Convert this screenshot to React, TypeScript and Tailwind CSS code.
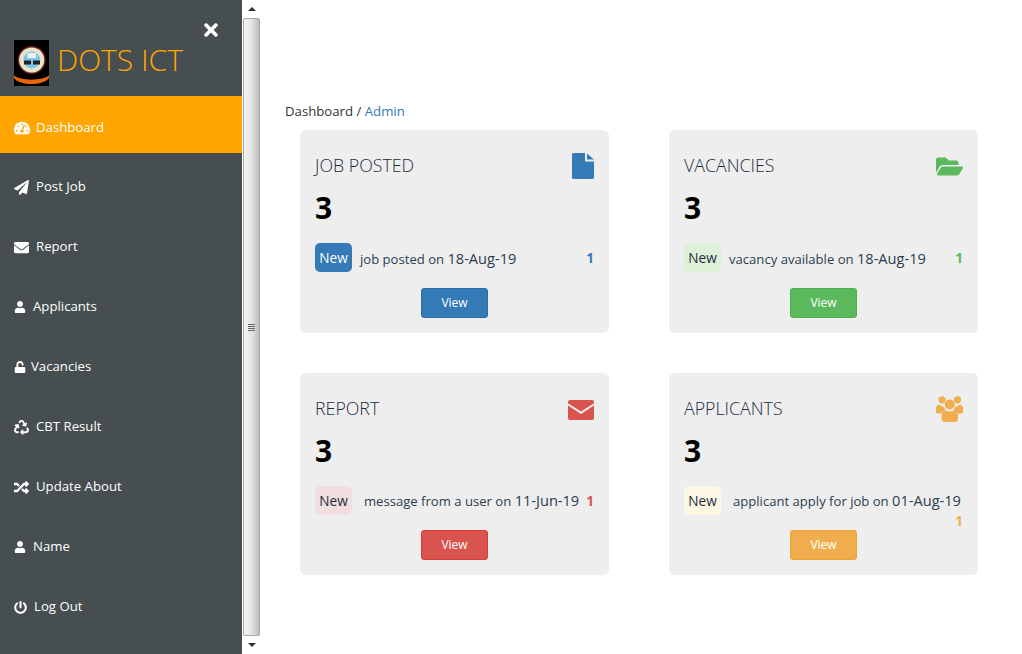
import { FaTachometerAlt, FaPaperPlane, FaEnvelope, FaUser, FaUnlock, FaRecycle, FaRandom, FaPowerOff, FaTimes, FaFolderOpen } from "react-icons/fa";

const font = "font-['Open_Sans','Noto_Sans',sans-serif]";

const navItems = [
  { label: "Post Job", icon: <FaPaperPlane size={15} />, slot: "w-[22px]" },
  { label: "Report", icon: <FaEnvelope size={15} />, slot: "w-[22px]" },
  { label: "Applicants", icon: <FaUser size={12} />, slot: "w-[19px]" },
  { label: "Vacancies", icon: <FaUnlock size={12} />, slot: "w-[17px]" },
  { label: "CBT Result", icon: <FaRecycle size={15} />, slot: "w-[22px]" },
  { label: "Update About", icon: <FaRandom size={15} />, slot: "w-[22px]" },
  { label: "Name", icon: <FaUser size={12} />, slot: "w-[19px]" },
  { label: "Log Out", icon: <FaPowerOff size={13} />, slot: "w-[20px]" },
];

function FileIcon() {
  return (
    <svg width="22" height="26" viewBox="0 0 22 26" fill="#337ab7">
      <path d="M1.5 0H13v8.5h9V24.5a1.5 1.5 0 0 1-1.5 1.5h-19A1.5 1.5 0 0 1 0 24.5V1.5A1.5 1.5 0 0 1 1.5 0Z" />
      <path d="M15 0.5 22 6.5H15Z" />
    </svg>
  );
}

function MailIcon() {
  return (
    <svg width="26" height="20" viewBox="0 0 26 20" fill="#d9534f">
      <path d="M2 0H24a2 2 0 0 1 2 2V3.2L13 11.5 0 3.2V2A2 2 0 0 1 2 0Z" />
      <path d="M0 5.6 13 14 26 5.6V18a2 2 0 0 1-2 2H2a2 2 0 0 1-2-2Z" />
    </svg>
  );
}

function UsersIcon() {
  return (
    <svg width="27" height="26" viewBox="0 0 27 26" fill="#f0ad4e">
      <circle cx="6" cy="3.8" r="3.6" />
      <circle cx="21.5" cy="3.8" r="3.6" />
      <circle cx="13.7" cy="8.5" r="5" />
      <path d="M0 12.5C0 9.5 2 8.5 3.5 8.5 4.5 10 6 10.5 7.5 10.5 8 12 8.8 13.2 10 14 7.5 14.5 5.8 16 5.3 17.5H1.5C.5 17.5 0 16.5 0 15.5Z" />
      <path d="M27 12.5C27 9.5 25 8.5 23.5 8.5 22.5 10 21 10.5 19.5 10.5 19 12 18.2 13.2 17 14 19.5 14.5 21.2 16 21.7 17.5H25.5C26.5 17.5 27 16.5 27 15.5Z" />
      <path d="M9.5 14.6C11 15.8 16.4 15.8 18 14.6 20.5 15 22 17 22 20V23C22 25 20.5 26 19 26H8.5C7 26 5.5 25 5.5 23V20C5.5 17 7 15 9.5 14.6Z" />
    </svg>
  );
}

const cards = [
  {
    title: "JOB POSTED",
    icon: <FileIcon />,
    iconBox: "h-[26px] mt-[-1px]",
    badge: "bg-[#337ab7] text-white",
    count: "text-[#337ab7]",
    text: "job posted on ",
    date: "18-Aug-19",
    textGap: "ml-2",
    btn: "bg-[#337ab7] border-[#2e6da4]",
  },
  {
    title: "VACANCIES",
    icon: <FaFolderOpen size={27} color="#5cb85c" />,
    iconBox: "h-[26px] mt-[-1px]",
    badge: "bg-[#dff0d8] text-[#1f2d3d]",
    count: "text-[#5cb85c]",
    text: "vacancy available on ",
    date: "18-Aug-19",
    textGap: "ml-2",
    btn: "bg-[#5cb85c] border-[#4cae4c]",
  },
  {
    title: "REPORT",
    icon: <MailIcon />,
    iconBox: "h-[20px] mt-[3px]",
    badge: "bg-[#f2dede] text-[#1f2d3d]",
    count: "text-[#d9534f]",
    text: "message from a user on ",
    date: "11-Jun-19",
    textGap: "ml-3",
    btn: "bg-[#d9534f] border-[#d43f3a]",
  },
  {
    title: "APPLICANTS",
    icon: <UsersIcon />,
    iconBox: "h-[26px] mt-[-1px]",
    badge: "bg-[#fcf8e3] text-[#1f2d3d]",
    count: "text-[#f0ad4e]",
    text: "applicant apply for job on ",
    date: "01-Aug-19",
    textGap: "ml-3",
    btn: "bg-[#f0ad4e] border-[#eea236]",
    wrapCount: true,
  },
];

function Logo() {
  return (
    <svg width="35" height="46" viewBox="0 0 35 46">
      <rect width="35" height="46" fill="#000" />
      <circle cx="17.7" cy="20" r="14" fill="#6e1c18" />
      <circle cx="17.7" cy="20" r="12.6" fill="#e8e4c8" />
      <circle cx="17.7" cy="20" r="8.4" fill="#7cc4e8" />
      <rect x="13.5" y="13" width="8.5" height="5" fill="#f2f2f2" />
      <rect x="10" y="20.5" width="7" height="4" fill="#222" />
      <rect x="19" y="20.5" width="7" height="4" fill="#222" />
      <path d="M0 35.5C7 41 28 41 35 35.5V38C29 46 6 46 0 38Z" fill="#e8650a" />
    </svg>
  );
}

function Scrollbar() {
  return (
    <div className="ml-[1px] flex h-full w-[17px] shrink-0 flex-col bg-[#f0f0f0]">
      <div className="flex h-[18px] items-center justify-center bg-white">
        <div className="h-0 w-0 border-x-[4px] border-b-[4px] border-x-transparent border-b-[#333]" />
      </div>
      <div className="flex flex-1 items-center justify-center rounded-[2px] border border-[#a8a8a8] bg-gradient-to-r from-[#f4f4f4] via-[#e4e4e4] to-[#bcbcbc]">
        <div className="flex w-[7px] flex-col gap-[1px]">
          <div className="h-[1px] bg-[#666]" />
          <div className="h-[1px] bg-[#666]" />
          <div className="h-[1px] bg-[#666]" />
          <div className="h-[1px] bg-[#666]" />
        </div>
      </div>
      <div className="flex h-[18px] items-center justify-center bg-white">
        <div className="h-0 w-0 border-x-[4px] border-t-[4px] border-x-transparent border-t-[#333]" />
      </div>
    </div>
  );
}

export default function App() {
  return (
    <div className={`flex h-[654px] w-[1022px] overflow-hidden bg-white text-[#333] ${font}`}>
      <aside className="flex h-full w-[242px] shrink-0 flex-col bg-[#464e50] text-[13.2px] text-white">
        <div className="h-[96px]">
          <div className="flex h-[40px] justify-end pr-[21px] pt-[20px]">
            <FaTimes size={20} />
          </div>
          <div className="flex items-center pl-[14px]">
            <Logo />
            <span className="mb-[6px] ml-[8px] text-[30px] font-light leading-[40px] text-[#ffa500]">DOTS ICT</span>
          </div>
        </div>
        <div className="flex h-[57px] items-center bg-[#ffa500] pl-[14px] pt-[7px]">
          <span className="flex w-[22px]"><FaTachometerAlt size={16} /></span>
          <span>Dashboard</span>
        </div>
        <nav className="mt-[4px] flex flex-col">
          {navItems.map((item) => (
            <a key={item.label} href="#" className="flex h-[60px] items-center pl-[14px]">
              <span className={`flex ${item.slot}`}>{item.icon}</span>
              <span>{item.label}</span>
            </a>
          ))}
        </nav>
      </aside>
      <Scrollbar />
      <main className="flex-1 pl-[25px] pt-[102px]">
        <div className="h-[28px] text-[13.2px] leading-[19px]">
          Dashboard / <span className="text-[#337ab7]">Admin</span>
        </div>
        <div className="ml-[15px] grid w-[678px] grid-cols-2 gap-x-[60px] gap-y-[40px]">
          {cards.map((c) => (
            <div key={c.title} className="flex h-[202.5px] flex-col rounded-[6px] bg-[#eeeeee] px-[15px] pb-[15px] pt-[24px] text-[13.6px]">
              <div className="flex h-[25px] items-start justify-between">
                <h3 className="text-[17.8px] font-light leading-[22px] text-[#1f2d3d]">{c.title}</h3>
                <div className={c.iconBox}>{c.icon}</div>
              </div>
              <div className="mt-[11px] text-[30px] font-bold leading-[36px] text-black">3</div>
              <div className="mt-[17px] flex h-[29px] shrink-0 items-center">
                <span className={`flex h-[29px] w-[37px] shrink-0 items-center justify-center rounded-[5px] pt-[2px] ${c.badge}`}>New</span>
                <span className={`${c.textGap} whitespace-nowrap pt-[2px] text-[13.1px] text-[#2c3e50]`}>
                  {c.text}
                  <span className="text-[14.6px]">{c.date}</span>
                </span>
                {!c.wrapCount && <span className={`ml-auto pt-[2px] font-bold ${c.count}`}>1</span>}
              </div>
              {c.wrapCount && <div className={`h-[12px] text-right font-bold leading-[12px] ${c.count}`}>1</div>}
              <button className={`mx-auto mt-auto h-[30px] w-[67px] shrink-0 rounded-[3px] border text-[12px] text-white ${c.btn}`}>View</button>
            </div>
          ))}
        </div>
      </main>
    </div>
  );
}
